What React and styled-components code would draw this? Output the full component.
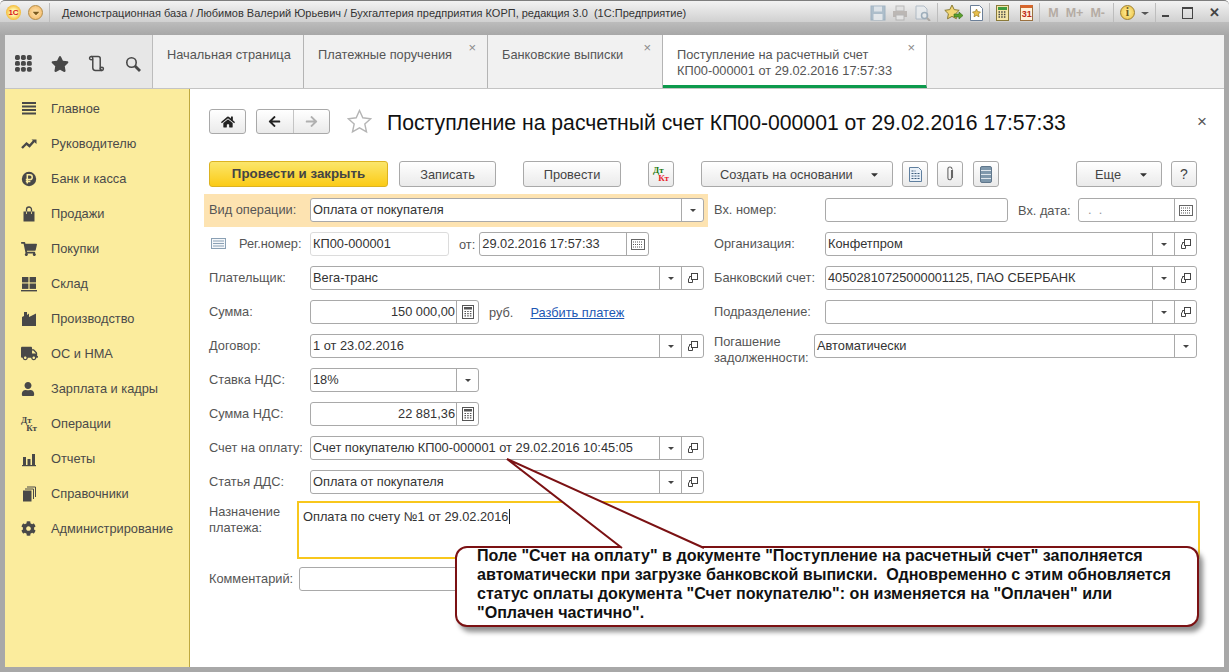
import React from 'react';
import styled, { createGlobalStyle } from 'styled-components';
import { FaShoppingCart, FaTruck, FaUser, FaCog, FaStar, FaHome, FaArrowLeft, FaArrowRight, FaCaretDown } from 'react-icons/fa';

const colors = {
  text: '#4a4a4a',
  label: '#555',
  border: '#a9a9a9',
  icon: '#484848',
};

const GlobalStyle = createGlobalStyle`
  html, body { margin: 0; padding: 0; }
  body { font-family: "Liberation Sans", Arial, sans-serif; font-size: 12.8px; color: ${colors.text}; }
`;

const DtKt = styled.span`
  display: inline-flex;
  flex-direction: column;
  width: 16px;
  font-size: 9px;
  line-height: 8px;
  font-family: "Liberation Serif", serif;
  b { color: ${(p) => (p.$color ? '#1e7a10' : colors.icon)}; }
  b + b { align-self: flex-end; color: ${(p) => (p.$color ? '#e8262c' : colors.icon)}; }
`;

const Ic = ({ children, size = 16 }) => (
  <svg width={size} height={size} viewBox="0 0 16 16" fill={colors.icon}>{children}</svg>
);

const navItems = [
  ['Главное', <Ic><rect x="1" y="1" width="14" height="2" /><rect x="1" y="4.5" width="14" height="2" /><rect x="1" y="8" width="14" height="2" /><rect x="1" y="11.5" width="14" height="2" /></Ic>],
  ['Руководителю', <Ic><path d="M1 12l4.5-4.5 3 2.5L13 5" fill="none" stroke={colors.icon} strokeWidth="2.4" /><path d="M10.5 3.5H15.5V8z" /></Ic>],
  ['Банк и касса', <Ic><circle cx="8" cy="8" r="7.2" /><path d="M6.3 12.5V3.8h2.6a2.3 2.3 0 0 1 0 4.7H4.8M4.8 10.5h4.6" fill="none" stroke="#fbec9d" strokeWidth="1.5" /></Ic>],
  ['Продажи', <Ic><path d="M2.500 5.500h11v10h-11z" /><path d="M5.500 8V3.500a2.500 2.500 0 0 1 5 0V8" fill="none" stroke={colors.icon} strokeWidth="1.300" /><path d="M5.500 5.500v2.500M10.500 5.500v2.500" stroke="#fbec9d" strokeWidth=".8" /></Ic>],
  ['Покупки', <FaShoppingCart size={16} color={colors.icon} />],
  ['Склад', <Ic><rect x="1" y="1" width="6.4" height="5.4" /><rect x="8.6" y="1" width="6.4" height="5.4" /><rect x="1" y="7.5" width="6.4" height="5.4" /><rect x="8.6" y="7.5" width="6.4" height="5.4" /><rect x="0" y="14" width="16" height="1.4" /></Ic>],
  ['Производство', <Ic><path d="M1 15V6l2-1V1h3v3l2-1.500V6l7-3.500V15z" /></Ic>],
  ['ОС и НМА', <FaTruck size={17} color={colors.icon} />],
  ['Зарплата и кадры', <FaUser size={14} color={colors.icon} />],
  ['Операции', <DtKt><b>Дт</b><b>Кт</b></DtKt>],
  ['Отчеты', <Ic><rect x="2" y="6" width="3" height="8" /><rect x="6.5" y="8" width="3" height="6" /><rect x="11" y="3" width="3" height="11" /><rect x="1" y="14" width="14" height="1.2" /></Ic>],
  ['Справочники', <Ic><rect x="2" y="4.5" width="8.5" height="11" /><path d="M4 3h8.5v10" fill="none" stroke={colors.icon} strokeWidth="1" /><path d="M6 1h8.5v10" fill="none" stroke={colors.icon} strokeWidth="1" /></Ic>],
  ['Администрирование', <FaCog size={15} color={colors.icon} />],
];

const tabs = [
  { title: 'Начальная страница', w: 151 },
  { title: 'Платежные поручения', w: 184, close: true },
  { title: 'Банковские выписки', w: 175, close: true },
  { title: <>Поступление на расчетный счет<br />КП00-000001 от 29.02.2016 17:57:33</>, w: 264, close: true, active: true },
];

const CalcIcon = () => (
  <svg width="12" height="14" viewBox="0 0 12 14"><rect x=".5" y=".5" width="11" height="13" fill="#fff" stroke="#555" /><rect x="2" y="2" width="8" height="2.5" fill="#555" /><path d="M2.5 6.5h7M2.5 8.7h7M2.5 10.9h7" stroke="#555" strokeWidth="1.2" strokeDasharray="1.5 1.2" /></svg>
);
const DateIcon = () => (
  <svg width="14" height="11" viewBox="0 0 14 11"><rect x=".5" y=".5" width="13" height="10" fill="#fff" stroke="#666" /><path d="M2 3h10M2 5.5h10M2 8h10" stroke="#555" strokeDasharray="1 1" /></svg>
);
const OpenIcon = () => (
  <svg width="12" height="12" viewBox="0 0 12 12" fill="none" stroke="#444"><rect x="4.5" y="1.5" width="6" height="6" /><path d="M4.5 4.5H2.5v2M1.5 6.5v4h4v-3" /></svg>
);

const Drop = () => (
  <FieldBtn><DropArrow /></FieldBtn>
);
const Open = () => (
  <FieldBtn><OpenIcon /></FieldBtn>
);

const Combo = ({ value, open, w }) => (
  <Field $w={w}>
    <FieldText>{value}</FieldText>
    <Drop />
    {open && <Open />}
  </Field>
);

const FormRow = ({ label, children, labelW, tall }) => (
  <Row>
    <Label $w={labelW} $tall={tall}>{label}</Label>
    {children}
  </Row>
);

const App = () => (
  <Window>
    <GlobalStyle />
    <TitleBar>
      <AppLogo>1С</AppLogo>
      <MenuOrb><FaCaretDown size={10} color="#7a5a20" /></MenuOrb>
      <TitleSep />
      <TitleText>Демонстрационная база / Любимов Валерий Юрьевич / Бухгалтерия предприятия КОРП, редакция 3.0  (1С:Предприятие)</TitleText>
      <TitleTools>
        <ToolGroup $muted>
          <svg width="16" height="16" viewBox="0 0 16 16"><rect x="1" y="1" width="14" height="14" fill="#9db3c4" stroke="#8ba4b8" /><rect x="4" y="1.500" width="8" height="5" fill="#dbe3ea" /><rect x="3.500" y="9" width="9" height="6" fill="#e6ebef" /></svg>
          <svg width="16" height="16" viewBox="0 0 16 16"><rect x="4" y="1" width="8" height="5" fill="#e0e0e0" stroke="#aaa" /><rect x="1" y="6" width="14" height="6" fill="#b0aaa6" /><rect x="4" y="10" width="8" height="5" fill="#e8e8e8" stroke="#aaa" /></svg>
          <svg width="17" height="16" viewBox="0 0 17 16" fill="none"><path d="M2 1h8l3 3v10H2z" fill="#e8ecef" stroke="#a0aebc" /><circle cx="10.500" cy="10.500" r="3" stroke="#8a9fb0" strokeWidth="1.500" /><path d="M13 13l3 3" stroke="#a09a94" strokeWidth="2" /></svg>
        </ToolGroup>
        <TitleSep />
        <ToolGroup>
          <svg width="20" height="17" viewBox="0 0 20 17"><path d="M8 1l2.200 4.600 5 .7-3.600 3.500.8 5L8 12.400l-4.500 2.400.9-5L.8 6.300l5-.7z" fill="#f3d774" stroke="#8a7b32" /><path d="M10 10h5V8l4 3.500-4 3.500v-2h-5z" fill="#5aa02c" stroke="#34691a" strokeWidth=".6" /></svg>
          <svg width="13" height="16" viewBox="0 0 13 16"><path d="M.5.500h9l3 3v12H.5z" fill="#fff" stroke="#6b7f98" /><path d="M6.500 4l1.200 2.600 2.800.4-2 2 .5 2.800-2.500-1.400L4 11.800l.5-2.800-2-2 2.800-.4z" fill="#e9bf4c" stroke="#8a6b12" strokeWidth=".6" /></svg>
        </ToolGroup>
        <TitleSep />
        <ToolGroup $gap={11}>
          <svg width="13" height="16" viewBox="0 0 13 16"><rect x=".5" y=".5" width="12" height="15" fill="#f5e6a8" stroke="#8a7a3a" /><rect x="2" y="2" width="9" height="3" fill="#3f9b3f" /><path d="M2.500 7h8M2.500 9.500h8M2.500 12h8" stroke="#444" strokeWidth="1.400" strokeDasharray="1.500 1.200" /></svg>
          <CalendarIcon><span>31</span></CalendarIcon>
        </ToolGroup>
        <TitleSep />
        <MemoGroup><span>M</span><span>M+</span><span>M-</span></MemoGroup>
        <TitleSep />
        <InfoOrb>i</InfoOrb>
        <CaretLine />
        <TitleSep />
        <WinBtns>
          <MinBtn />
          <MaxBtn />
          <CloseGlyph>✕</CloseGlyph>
        </WinBtns>
      </TitleTools>
    </TitleBar>
    <GrayBand />
    <TabBar>
      <TabIcons>
        <AppsIcon viewBox="0 0 16 16">
          {[0, 1, 2].flatMap((r) => [0, 1, 2].map((c) => (
            <rect key={`${r}${c}`} x={c * 5.6} y={r * 5.6} width="4.6" height="4.6" rx="1.6" />
          )))}
        </AppsIcon>
        <FaStar size={18} color={colors.icon} />
        <svg width="17" height="17" viewBox="0 0 16 16" fill="none" stroke={colors.icon} strokeWidth="1.400">
          <path d="M3 1.500h6.500c1.500 0 2 1 2 2V12c0 1.500 1 2.500 2 2.500H7c-1.500 0-2.500-1-2.500-2.500V3.500" />
          <circle cx="3" cy="3" r="1.500" />
          <circle cx="13" cy="13" r="1.500" />
        </svg>
        <SearchWrap>
          <svg width="16" height="16" viewBox="0 0 16 16" fill="none" stroke={colors.icon}>
            <circle cx="6.500" cy="6.500" r="4.700" strokeWidth="1.600" />
            <path d="M10 10l5 5" strokeWidth="2.800" />
          </svg>
        </SearchWrap>
      </TabIcons>
      {tabs.map((t, i) => (
        <Tab key={i} $w={t.w} $active={t.active}>
          <TabTitle>{t.title}</TabTitle>
          {t.close && <TabClose>×</TabClose>}
        </Tab>
      ))}
    </TabBar>
    <Body>
      <Sidebar>
        {navItems.map(([name, icon]) => (
          <NavItem key={name}>
            <NavIcon>{icon}</NavIcon>
            {name}
          </NavItem>
        ))}
      </Sidebar>
      <Content>
        <Header>
          <HomeBtn><FaHome size={14} color="#222" /></HomeBtn>
          <NavGroup>
            <NavPart><FaArrowLeft size={13} color="#222" /></NavPart>
            <NavPart $last><FaArrowRight size={13} color="#b0b0b0" /></NavPart>
          </NavGroup>
          <StarWrap>
            <svg width="25" height="25" viewBox="0 0 25 25"><path d="M12.500 1.500l3.300 7.300 7.900.9-5.900 5.300 1.700 7.800-7-4-7 4 1.700-7.800L1.300 9.700l7.900-.9z" fill="#fff" stroke="#b5b5b5" strokeWidth="1.400" /></svg>
          </StarWrap>
          <PageTitle>Поступление на расчетный счет КП00-000001 от 29.02.2016 17:57:33</PageTitle>
          <PageClose>×</PageClose>
        </Header>
        <Toolbar>
          <PrimaryBtn>Провести и закрыть</PrimaryBtn>
          <Btn $w={97} $ml={11}>Записать</Btn>
          <Btn $w={98} $ml={27}>Провести</Btn>
          <IconBtn $ml={27}><DtKt $color><b>Дт</b><b>Кт</b></DtKt></IconBtn>
          <Btn $w={192} $ml={27} $menu>Создать на основании<FaCaretDown size={11} color="#333" /></Btn>
          <IconBtn $ml={9}>
            <svg width="13" height="15" viewBox="0 0 13 15"><path d="M.5.500h9l3 3v11H.5z" fill="#eaf1f8" stroke="#5f7f9f" /><path d="M2.500 4h4M2.500 6.500h8M2.500 9h8M2.500 11.500h8" stroke="#3c5c7c" strokeDasharray="2 1" /></svg>
          </IconBtn>
          <IconBtn $ml={9}>
            <svg width="8" height="16" viewBox="0 0 8 16" fill="none" stroke="#666" strokeWidth="1.100"><path d="M5.500 4v8a1.800 1.800 0 0 1-3.600 0V3a2 2 0 0 1 4 0" /><path d="M6.500 3.500V12" /></svg>
          </IconBtn>
          <IconBtn $ml={10}>
            <svg width="12" height="17" viewBox="0 0 12 17"><rect x=".5" y=".5" width="11" height="16" rx="1.500" fill="#7f98ac" stroke="#60778c" /><path d="M1 4.500h10M1 8.500h10M1 12.500h10" stroke="#dfe6ec" strokeWidth="1.100" /></svg>
          </IconBtn>
          <Btn $w={86} $ml="auto" $menu $pad={18}>Еще<FaCaretDown size={11} color="#333" /></Btn>
          <IconBtn $ml={9}>?</IconBtn>
        </Toolbar>
        <FormColumns>
          <Column $w={495}>
            <HighlightRow>
              <Label>Вид операции:</Label>
              <Combo value="Оплата от покупателя" />
            </HighlightRow>
            <Row>
              <RegIcon viewBox="0 0 15 12"><rect x=".5" y=".5" width="14" height="10" fill="#f4f7fa" stroke="#8aa0b4" /><path d="M2 3h11M2 5.500h11M2 8h11" stroke="#8aa0b4" /></RegIcon>
              <Label $w={71}>Рег.номер:</Label>
              <Field $w={139} $light><FieldText>КП00-000001</FieldText></Field>
              <Inline $ml={10}>от:</Inline>
              <Field $w={170} $ml={4}><FieldText>29.02.2016 17:57:33</FieldText><FieldBtn><DateIcon /></FieldBtn></Field>
            </Row>
            <FormRow label="Плательщик:"><Combo value="Вега-транс" open /></FormRow>
            <FormRow label="Сумма:">
              <Field $w={169}><FieldText $right>150 000,00</FieldText><FieldBtn><CalcIcon /></FieldBtn></Field>
              <Inline $ml={10}>руб.</Inline>
              <PayLink>Разбить платеж</PayLink>
            </FormRow>
            <FormRow label="Договор:"><Combo value="1 от 23.02.2016" open /></FormRow>
            <FormRow label="Ставка НДС:"><Combo value="18%" w={169} /></FormRow>
            <FormRow label="Сумма НДС:">
              <Field $w={169}><FieldText $right>22 881,36</FieldText><FieldBtn><CalcIcon /></FieldBtn></Field>
            </FormRow>
            <FormRow label="Счет на оплату:"><Combo value="Счет покупателю КП00-000001 от 29.02.2016 10:45:05" open /></FormRow>
            <FormRow label="Статья ДДС:"><Combo value="Оплата от покупателя" open /></FormRow>
          </Column>
          <Column $grow>
            <FormRow label="Вх. номер:" labelW={111}>
              <Field $w={183} />
              <Inline $ml={10}>Вх. дата:</Inline>
              <Field $w={119} $ml="auto"><FieldText $dim>{'  .  .'}</FieldText><FieldBtn><DateIcon /></FieldBtn></Field>
            </FormRow>
            <FormRow label="Организация:" labelW={111}><Combo value="Конфетпром" open /></FormRow>
            <FormRow label="Банковский счет:" labelW={111}><Combo value="40502810725000001125, ПАО СБЕРБАНК" open /></FormRow>
            <FormRow label="Подразделение:" labelW={111}><Combo value="" open /></FormRow>
            <FormRow label={<>Погашение<br />задолженности:</>} labelW={100} tall><Combo value="Автоматически" /></FormRow>
          </Column>
        </FormColumns>
        <NoteRow>
          <NoteLabel>Назначение<br />платежа:</NoteLabel>
          <NoteBox>Оплата по счету №1 от 29.02.2016<Caret /></NoteBox>
        </NoteRow>
        <CommentRow>
          <Label $w={90}>Комментарий:</Label>
          <Field />
        </CommentRow>
      </Content>
    </Body>
    <Callout>
      <Pointer width="200" height="92" viewBox="0 0 200 92">
        <path d="M116 90L1 1 198 90" fill="#fff" stroke="#7b1113" strokeWidth="2" />
      </Pointer>
      <CalloutText>
        Поле "Счет на оплату" в документе "Поступление на расчетный счет" заполняется<br />
        автоматически при загрузке банковской выписки.  Одновременно с этим обновляется<br />
        статус оплаты документа "Счет покупателю": он изменяется на "Оплачен" или<br />
        "Оплачен частично".
      </CalloutText>
    </Callout>
  </Window>
);

const Window = styled.div`
  position: relative;
  width: 1229px;
  height: 672px;
  box-sizing: border-box;
  padding: 0 5px 5px;
  display: flex;
  flex-direction: column;
  overflow: hidden;
  background: #a8a8a8;
  border-top: 1px solid #7d7d7d;
  border-radius: 5px 5px 0 0;
`;

const TitleBar = styled.div`
  height: 21px;
  display: flex;
  align-items: center;
  flex: none;
  margin: 0 -5px;
  padding: 2px 5px 0 6px;
  box-sizing: border-box;
  background: linear-gradient(#f2f2f2, #d0d0d0);
`;

const GrayBand = styled.div`
  height: 13px;
  flex: none;
  margin: 0 -5px;
  background: linear-gradient(#bcbcbc, #a8a8a8);
`;

const AppLogo = styled.div`
  width: 15px;
  height: 15px;
  border-radius: 50%;
  background: radial-gradient(circle, #fff3a8 30%, #f3b52c 75%);
  color: #d8141c;
  font-size: 8px;
  font-weight: bold;
  line-height: 15px;
  text-align: center;
`;

const MenuOrb = styled.div`
  width: 15px;
  height: 15px;
  margin-left: 7px;
  border-radius: 50%;
  border: 1px solid #b58c46;
  box-sizing: border-box;
  background: radial-gradient(circle, #ffe6b0, #f2b35e);
  display: flex;
  align-items: center;
  justify-content: center;
`;

const TitleSep = styled.div`
  width: 1px;
  height: 19px;
  margin: 0 6px 0 6px;
  background: #bdbdbd;
  flex: none;
`;

const TitleText = styled.div`
  margin-left: 6px;
  font-size: 11px;
  color: #333;
  white-space: pre;
`;

const TitleTools = styled.div`
  margin-left: auto;
  display: flex;
  align-items: center;
`;

const ToolGroup = styled.div`
  display: flex;
  align-items: center;
  gap: ${(p) => p.$gap || 6}px;
  opacity: ${(p) => (p.$muted ? 0.75 : 1)};
`;

const CalendarIcon = styled.div`
  width: 13px;
  height: 16px;
  box-sizing: border-box;
  border: 1px solid #9a7040;
  border-top: 3px solid #d8662c;
  background: #fff3dc;
  font-size: 9px;
  font-weight: bold;
  line-height: 12px;
  text-align: center;
  color: #c02a18;
`;

const MemoGroup = styled.div`
  display: flex;
  gap: 7px;
  padding: 0 2px;
  font-size: 12.5px;
  font-weight: bold;
  color: #b5aca4;
`;

const InfoOrb = styled.div`
  width: 15px;
  height: 15px;
  border-radius: 50%;
  border: 1px solid #9d8130;
  box-sizing: border-box;
  background: radial-gradient(circle, #fff2a0, #ebbd3c);
  font-family: "Liberation Serif", serif;
  font-weight: bold;
  font-size: 12px;
  line-height: 13px;
  text-align: center;
  color: #6c5a20;
`;

const CaretLine = styled.div`
  width: 0;
  height: 0;
  margin: 6px 0 0 6px;
  border: 4px solid transparent;
  border-top: 3px solid #555;
`;

const WinBtns = styled.div`
  display: flex;
  align-items: center;
  gap: 13px;
  padding-right: 4px;
`;

const MinBtn = styled.div`
  width: 7px;
  height: 2px;
  margin-top: 7px;
  background: #444;
`;

const MaxBtn = styled.div`
  width: 9px;
  height: 9px;
  border: 1px solid #444;
  border-top-width: 2px;
`;

const CloseGlyph = styled.div`
  font-size: 13px;
  font-weight: bold;
  color: #444;
  margin-left: 3px;
`;

const TabBar = styled.div`
  height: 54px;
  flex: none;
  display: flex;
  background: #f1f1f1;
  border-bottom: 1px solid #c4c4c4;
  box-sizing: border-box;
`;

const TabIcons = styled.div`
  width: 148px;
  flex: none;
  box-sizing: border-box;
  padding: 4px 0 0 10px;
  display: flex;
  align-items: center;
  gap: 19px;
  background: #e7e7e7;
  border-right: 1px solid #bcbcbc;
`;

const AppsIcon = styled.svg`
  width: 17px;
  height: 17px;
  fill: ${colors.icon};
  flex: none;
`;

const SearchWrap = styled.span`
  display: flex;
  margin-left: 1px;
`;

const Tab = styled.div`
  position: relative;
  width: ${(p) => p.$w}px;
  flex: none;
  box-sizing: border-box;
  padding: 12px 14px 0 14px;
  border-right: 1px solid #b4b4b4;
  background: ${(p) => (p.$active ? '#fff' : 'transparent')};
  ${(p) => p.$active && 'border-bottom: 3px solid #0c9a4c;'}
`;

const TabTitle = styled.div`
  font-size: 12.8px;
  line-height: 16px;
  white-space: nowrap;
  color: #555;
`;

const TabClose = styled.span`
  position: absolute;
  right: 11px;
  top: 6px;
  font-size: 13px;
  line-height: 13px;
  color: #8a8a8a;
`;

const Body = styled.div`
  flex: 1;
  display: flex;
  min-height: 0;
`;

const Sidebar = styled.nav`
  width: 185px;
  flex: none;
  box-sizing: border-box;
  padding: 2px 0 0 16px;
  background: #fbec9d;
  border-right: 1px solid #bfa93f;
`;

const NavItem = styled.div`
  height: 35px;
  display: flex;
  align-items: center;
  font-size: 12.8px;
  color: #4a4a4a;
`;

const NavIcon = styled.span`
  width: 30px;
  flex: none;
  display: flex;
  align-items: center;
`;

const Content = styled.main`
  flex: 1;
  min-width: 0;
  box-sizing: border-box;
  padding: 20px 27px 0 19px;
  background: #fff;
`;

const Header = styled.header`
  height: 25px;
  display: flex;
  align-items: center;
`;

const raised = `
  box-sizing: border-box;
  border: 1px solid #a9a9a9;
  border-radius: 3px;
  background: linear-gradient(#ffffff, #eaeaea);
`;

const HomeBtn = styled.div`
  ${raised}
  width: 37px;
  height: 25px;
  display: flex;
  align-items: center;
  justify-content: center;
`;

const NavGroup = styled.div`
  ${raised}
  width: 74px;
  height: 25px;
  margin-left: 10px;
  display: flex;
`;

const NavPart = styled.div`
  flex: 1;
  display: flex;
  align-items: center;
  justify-content: center;
  ${(p) => p.$last && 'border-left: 1px solid #c4c4c4;'}
`;

const StarWrap = styled.span`
  display: flex;
  margin-left: 17px;
`;

const PageTitle = styled.h1`
  margin: 2px 0 0 15px;
  font-size: 21.2px;
  font-weight: normal;
  color: #111;
  white-space: nowrap;
`;

const PageClose = styled.span`
  position: absolute;
  right: 22px;
  top: 111px;
  font-size: 17px;
  color: #555;
`;

const Toolbar = styled.div`
  height: 26px;
  margin-top: 27px;
  display: flex;
`;

const PrimaryBtn = styled.div`
  width: 179px;
  height: 26px;
  box-sizing: border-box;
  border: 1px solid #dcb321;
  border-radius: 3px;
  background: linear-gradient(#fbe66b, #fbcb16);
  font-size: 13.3px;
  font-weight: bold;
  line-height: 24px;
  text-align: center;
  color: #444;
`;

const Btn = styled.div`
  ${raised}
  width: ${(p) => p.$w}px;
  height: 26px;
  margin-left: ${(p) => (p.$ml === 'auto' ? 'auto' : `${p.$ml}px`)};
  padding: 0 ${(p) => (p.$menu ? `12px 0 ${p.$pad || 18}px` : '0')};
  display: flex;
  align-items: center;
  justify-content: ${(p) => (p.$menu ? 'space-between' : 'center')};
  font-size: 12.8px;
  color: #444;
`;

const IconBtn = styled.div`
  ${raised}
  width: 26px;
  height: 26px;
  margin-left: ${(p) => p.$ml}px;
  display: flex;
  align-items: center;
  justify-content: center;
  font-size: 14px;
  color: #444;
`;

const FormColumns = styled.div`
  margin-top: 11px;
  display: flex;
  gap: 10px;
`;

const Column = styled.div`
  display: flex;
  flex-direction: column;
  gap: 10px;
  ${(p) => (p.$grow ? 'flex: 1;' : `width: ${p.$w}px; flex: none;`)}
`;

const Row = styled.div`
  height: 24px;
  display: flex;
  align-items: center;
`;

const HighlightRow = styled(Row)`
  margin: -4px -4px -5px -5px;
  padding: 4px 4px 5px 5px;
  background: #fde3b1;
`;

const Label = styled.label`
  width: ${(p) => p.$w || 101}px;
  flex: none;
  font-size: 12.8px;
  line-height: 16px;
  color: ${colors.label};
  white-space: nowrap;
  ${(p) => p.$tall && 'margin-top: 8px;'}
`;

const NoteLabel = styled(Label)`
  width: 88px;
  margin-top: 3px;
`;

const RegIcon = styled.svg`
  width: 15px;
  height: 12px;
  margin: 0 13px 0 2px;
  flex: none;
`;

const Field = styled.div`
  ${(p) => (p.$w ? `width: ${p.$w}px; flex: none;` : 'flex: 1;')}
  ${(p) => p.$ml && `margin-left: ${p.$ml === 'auto' ? 'auto' : `${p.$ml}px`};`}
  height: 24px;
  box-sizing: border-box;
  display: flex;
  background: #fff;
  border: 1px solid ${(p) => (p.$light ? '#dcdcdc' : colors.border)};
  border-radius: 3px;
`;

const FieldText = styled.div`
  flex: 1;
  min-width: 0;
  padding: 0 1px 0 2px;
  font-size: 12.8px;
  line-height: 22px;
  color: ${(p) => (p.$dim ? '#999' : '#333')};
  text-align: ${(p) => (p.$right ? 'right' : 'left')};
  white-space: pre;
`;

const FieldBtn = styled.div`
  width: 21px;
  flex: none;
  display: flex;
  align-items: center;
  justify-content: center;
  border-left: 1px solid ${colors.border};
`;

const DropArrow = styled.span`
  width: 0;
  height: 0;
  margin-top: 3px;
  border: 3.5px solid transparent;
  border-top: 3.5px solid #444;
`;

const Inline = styled.span`
  margin-left: ${(p) => p.$ml}px;
  font-size: 12.8px;
  color: ${colors.label};
  white-space: nowrap;
`;

const PayLink = styled.a`
  margin-left: 17px;
  font-size: 12.8px;
  color: #1c57b4;
  text-decoration: underline;
`;

const NoteRow = styled.div`
  margin-top: 7px;
  margin-right: -3px;
  display: flex;
`;

const NoteBox = styled.div`
  flex: 1;
  height: 58px;
  box-sizing: border-box;
  padding: 6px 4px;
  border: 2px solid #f8c71c;
  font-size: 12.8px;
  line-height: 16px;
  color: #333;
`;

const Caret = styled.span`
  display: inline-block;
  width: 1px;
  height: 15px;
  margin-left: 1px;
  vertical-align: top;
  background: #222;
`;

const CommentRow = styled(Row)`
  margin-top: 8px;
  height: 23px;
`;

const Callout = styled.div`
  position: absolute;
  left: 455px;
  top: 545px;
  width: 744px;
  height: 81px;
  box-sizing: border-box;
  border: 2px solid #7b1113;
  border-radius: 12px;
  background: #fff;
  box-shadow: 4px 5px 5px #8f8f8f;
`;

const Pointer = styled.svg`
  position: absolute;
  left: 49px;
  top: -90px;
  overflow: visible;
`;

const CalloutText = styled.div`
  margin-top: -2px;
  padding: 0 0 0 20px;
  font-size: 16.1px;
  font-weight: bold;
  line-height: 19px;
  color: #111;
  white-space: pre;
`;

export default App;
